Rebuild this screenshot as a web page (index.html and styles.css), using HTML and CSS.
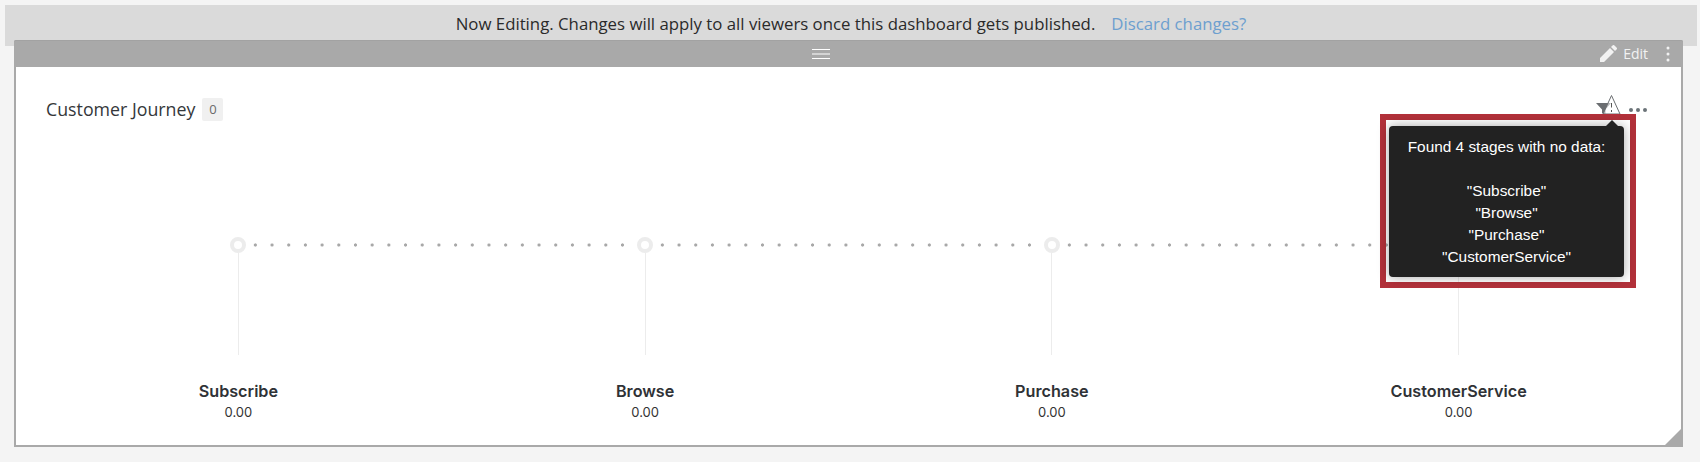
FILE: index.html
```html
<!DOCTYPE html>
<html lang="en">
<head>
<meta charset="utf-8">
<title>Customer Journey</title>
<link rel="stylesheet" href="styles.css">
</head>
<body>
<div class="banner">
  <span>Now Editing. Changes will apply to all viewers once this dashboard gets published.</span>
  <a class="discard">Discard changes?</a>
</div>
<section class="widget">
  <header class="bar">
    <svg class="handle" width="18" height="12" viewBox="0 0 18 12"><path d="M0 1.500h18M0 6h18M0 10.500h18" stroke="#fff" stroke-width="1" fill="none"/></svg>
    <div class="bar-actions">
      <svg class="pencil" width="17" height="17" viewBox="0 0 17 17"><path d="M0 17v-4L10 3l4 4L4 17zM11 2l1.500-1.500a1.400 1.400 0 0 1 2 0l2 2a1.400 1.400 0 0 1 0 2L15 6z" fill="#f2f2f2"/></svg>
      <span class="edit">Edit</span>
      <svg class="kebab" width="4" height="16" viewBox="0 0 4 16"><circle cx="2" cy="2" r="1.500" fill="#f2f2f2"/><circle cx="2" cy="8" r="1.500" fill="#f2f2f2"/><circle cx="2" cy="14" r="1.500" fill="#f2f2f2"/></svg>
    </div>
  </header>
  <div class="content">
    <div class="title-row">
      <div class="title-group">
        <h2 class="title">Customer Journey</h2>
        <span class="count">0</span>
      </div>
      <div class="tools">
        <svg class="alert" width="26" height="24" viewBox="0 0 26 24">
          <path d="M0 9h15l-5.500 6.500V21L6 19v-3.500z" fill="#6b6e71"/>
          <path d="M15.500 1.500 24 20H7z" fill="#fff" fill-opacity=".55" stroke="#6b6e71" stroke-width="1"/>
          <path d="M15.500 9v4.500M15.500 16v2" stroke="#555" stroke-width="1"/>
        </svg>
        <svg class="more" width="18" height="4" viewBox="0 0 18 4"><circle cx="2" cy="2" r="2" fill="#6b7378"/><circle cx="9" cy="2" r="2" fill="#6b7378"/><circle cx="16" cy="2" r="2" fill="#6b7378"/></svg>
      </div>
    </div>
    <div class="journey">
      <div class="stage">
        <div class="node"></div>
        <div class="stem"></div>
        <div class="stage-name">Subscribe</div>
        <div class="stage-value">0.00</div>
      </div>
      <div class="stage">
        <div class="node"></div>
        <div class="stem"></div>
        <div class="stage-name">Browse</div>
        <div class="stage-value">0.00</div>
      </div>
      <div class="stage">
        <div class="node"></div>
        <div class="stem"></div>
        <div class="stage-name">Purchase</div>
        <div class="stage-value">0.00</div>
      </div>
      <div class="stage">
        <div class="node"></div>
        <div class="stem"></div>
        <div class="stage-name">CustomerService</div>
        <div class="stage-value">0.00</div>
      </div>
    </div>
  </div>
  <div class="resize-corner"></div>
  <div class="callout">
    <div class="tooltip">
      <p>Found 4 stages with no data:</p>
      <p class="blank">&nbsp;</p>
      <p>"Subscribe"</p>
      <p>"Browse"</p>
      <p>"Purchase"</p>
      <p>"CustomerService"</p>
    </div>
  </div>
</section>
</body>
</html>
```
FILE: styles.css
```css
* { box-sizing: border-box; }
html, body { height: 100%; }
body {
  margin: 0;
  padding-top: 5px;
  background: #f4f4f4;
  overflow: hidden;
  font-family: "Open Sans", "Liberation Sans", sans-serif;
}
.banner {
  margin: 0 3px 0 5px;
  height: 41px;
  padding-bottom: 4px;
  background: #dadada;
  display: flex;
  justify-content: center;
  align-items: center;
  gap: 16px;
  font-size: 16.800px;
  color: #2a2a2a;
}
.discard { color: #6d9fcf; }
.widget {
  position: relative;
  margin: -6px 17px 0 14px;
  height: 407px;
  border: 2px solid #a9a9a9;
  border-top: 0;
  border-radius: 2px 2px 0 0;
  background: #fff;
}
.bar {
  height: 27px;
  margin: 0 -2px;
  background: #a9a9a9;
  border-top: 1px solid #a2a2a2;
  border-radius: 2px 2px 0 0;
  display: flex;
  align-items: center;
  justify-content: center;
  position: relative;
}
.handle { margin-left: -56px; }
.bar-actions {
  position: absolute;
  right: 13px;
  top: 4px;
  display: flex;
  align-items: center;
  height: 17px;
  color: #f2f2f2;
  font-size: 14px;
}
.edit { margin-left: 6px; margin-right: 18px; }
.content { padding: 30px 19px 0 19px; }
.title-row {
  display: flex;
  justify-content: space-between;
  align-items: center;
  padding: 0 0 0 11px;
  height: 24px;
}
.title-group { display: flex; align-items: center; gap: 7px; }
.title {
  margin: 0;
  font-size: 17.800px;
  font-weight: 400;
  color: #34373a;
}
.count {
  width: 21px;
  height: 23px;
  background: #f0f0f0;
  border-radius: 2px;
  display: flex;
  align-items: center;
  justify-content: center;
  font-size: 13px;
  color: #6a6a6a;
}
.tools { display: flex; align-items: center; gap: 7px; margin-right: 15px; }
.alert { margin-top: -6px; }
.more { margin-top: 2px; }
.journey {
  display: flex;
  margin-top: 116px;
}
.stage {
  position: relative;
  flex: 1 1 0;
  display: flex;
  flex-direction: column;
  align-items: center;
  font-family: Inter, "Liberation Sans", sans-serif;
}
.stage:not(:last-child)::after {
  content: "";
  position: absolute;
  top: 6px;
  left: calc(50% + 8.650px);
  width: 385px;
  height: 4px;
  background-image: radial-gradient(circle at center, #a8a8a8 1.300px, transparent 1.900px);
  background-size: 16.700px 4px;
}
.node {
  width: 16px;
  height: 16px;
  border-radius: 50%;
  border: 4px solid #ececec;
  background: #fff;
}
.stem {
  width: 1px;
  height: 102px;
  background: #ececec;
}
.stage-name {
  margin-top: 26px;
  font-size: 16.200px;
  font-weight: 600;
  line-height: 21px;
  color: #2f3236;
}
.stage-value {
  font-size: 13px;
  line-height: 20px;
  color: #333;
}
.resize-corner {
  position: absolute;
  right: -2px;
  bottom: -2px;
  width: 0;
  height: 0;
  border-style: solid;
  border-width: 0 0 20px 20px;
  border-color: transparent transparent #a9a9a9 transparent;
}
.callout {
  position: absolute;
  left: 1364px;
  top: 74px;
  width: 256px;
  height: 174px;
  border: 6px solid #b2313a;
  padding: 6px 3px;
}
.tooltip {
  position: relative;
  width: 235px;
  height: 151px;
  padding: 10px 0;
  background: #222;
  border-radius: 4px;
  color: #fff;
  text-align: center;
  font-family: "Liberation Sans", Arial, sans-serif;
  font-size: 15.400px;
  line-height: 22px;
  box-shadow: 0 0 12px rgba(0,0,0,.35);
}
.tooltip::before {
  content: "";
  position: absolute;
  top: -6px;
  left: 217px;
  width: 12px;
  height: 12px;
  background: #222;
  clip-path: polygon(50% 0, 100% 50%, 50% 100%, 0 50%);
}
.tooltip p { margin: 0; }
```
